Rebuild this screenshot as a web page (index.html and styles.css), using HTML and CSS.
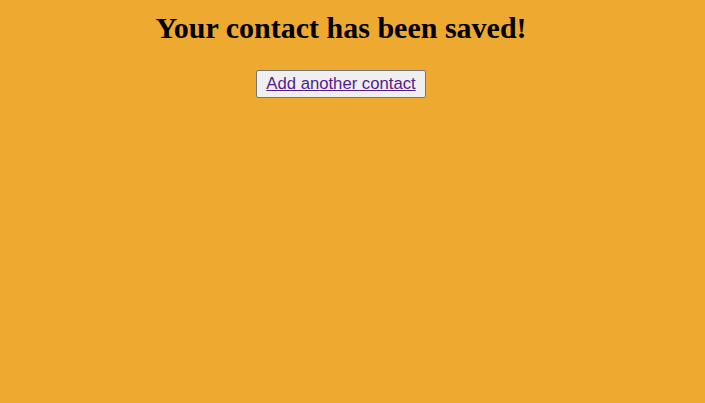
FILE: index.html
```html
<!DOCTYPE html>
<html>
<head>
<meta charset="utf-8">
<link rel="stylesheet" href="styles.css">
</head>
<body>
<main class="page">
  <h1 class="title">Your contact has been saved!</h1>
  <div class="actions">
    <button class="btn" type="button"><a class="btn-link" href="#">Add another contact</a></button>
  </div>
</main>
</body>
</html>
```
FILE: styles.css
```css
html, body {
  margin: 0;
  padding: 0;
  background: #eea931;
}
.page {
  width: 682px;
  text-align: center;
  padding-top: 11px;
}
.title {
  font-family: "Liberation Serif", "Times New Roman", serif;
  font-size: 30px;
  font-weight: bold;
  margin: 0 0 25px;
  color: #000;
}
.actions {
  margin: 0;
}
.btn {
  font-family: "Liberation Sans", Arial, sans-serif;
  font-size: 16.7px;
  background: #efefef;
  border: 1px solid #767676;
  border-radius: 2px;
  padding: 3px 9px;
  margin: 0;
}
.btn-link {
  color: #551a8b;
  text-decoration: underline;
}
```
